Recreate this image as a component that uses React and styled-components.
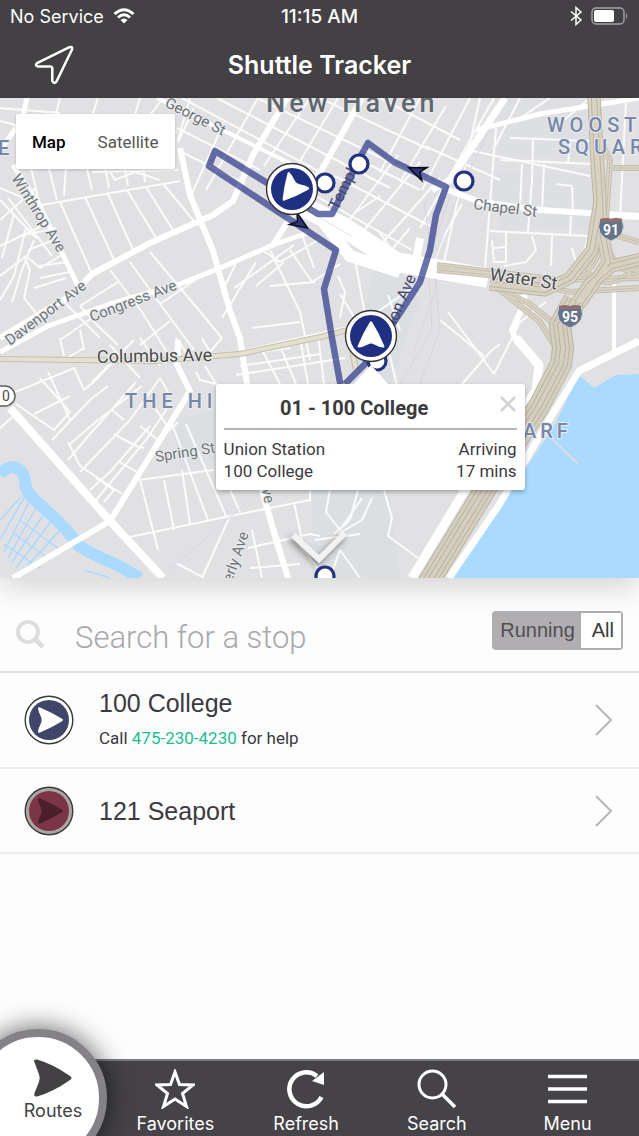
import React, { Component } from 'react'
import styled, { createGlobalStyle } from 'styled-components'

const GlobalStyle = createGlobalStyle`
  * {
    box-sizing: border-box;
  }
  body {
    margin: 0;
    background: #fdfdfe;
    font-family: Roboto, "Liberation Sans", sans-serif;
    color: #3b3a3e;
  }
  button, input {
    font: inherit;
    color: inherit;
    border: 0;
    padding: 0;
    margin: 0;
    background: none;
  }
`;

const Page = styled.div`
  display: flex;
  flex-direction: column;
  min-height: 100vh;
  overflow: hidden;
`;

const Header = styled.header`
  background: #434144;
  color: #fff;
  font-family: Inter, "Liberation Sans", sans-serif;
`;

const StatusBar = styled.div`
  display: grid;
  grid-template-columns: 1fr auto 1fr;
  align-items: center;
  height: 32px;
  padding: 0 10px;
  font-size: 18px;
  svg {
    display: block;
  }
`;

const StatusGroup = styled.div`
  display: flex;
  align-items: center;
  justify-content: ${props => props.$end ? 'flex-end' : 'flex-start'};
  gap: 9px;
`;

const Clock = styled.div`
  font-size: 19px;
  font-weight: 500;
`;

const TitleBar = styled.div`
  display: grid;
  grid-template-columns: 1fr auto 1fr;
  align-items: center;
  height: 66px;
  padding: 0 34px;
  h1 {
    margin: 0;
    font-size: 25px;
    font-weight: 600;
  }
  button {
    justify-self: start;
  }
  svg {
    display: block;
  }
`;

const MapWrapper = styled.section`
  position: relative;
  z-index: 1;
  height: 480px;
  box-shadow: 0 10px 28px rgba(0, 0, 0, 0.16);
`;

const MapCanvas = styled.svg`
  display: block;
  width: 100%;
  height: 100%;
  font-family: Roboto, "Liberation Sans", sans-serif;
`;

const MapTypeSwitch = styled.div`
  position: absolute;
  top: 16px;
  left: 16px;
  display: flex;
  height: 55px;
  background: #fff;
  border-radius: 2px;
  box-shadow: 0 1px 3px rgba(0, 0, 0, 0.2);
`;

const MapTypeButton = styled.button`
  padding: 0 16px;
  font-size: 17px;
  font-weight: ${props => props.$active ? 500 : 400};
  color: ${props => props.$active ? '#000' : '#565656'};
`;

const Popup = styled.div`
  position: absolute;
  top: 286px;
  left: 58%;
  width: 309px;
  margin-left: -155px;
  padding: 8px;
  background: #fff;
  border-radius: 3px;
  box-shadow: 0 2px 4px rgba(0, 0, 0, 0.3);
  &::before {
    content: '';
    position: absolute;
    top: -19px;
    left: 137px;
    border: 18px solid transparent;
    border-top: 0;
    border-bottom: 20px solid #fff;
  }
`;

const PopupHead = styled.div`
  display: flex;
  height: 38px;
  border-bottom: 2px solid #b4b4b6;
  h2 {
    flex: 1;
    margin: 0;
    font-size: 20px;
    line-height: 32px;
    font-weight: 700;
    text-align: center;
  }
  button {
    width: 32px;
    height: 28px;
    padding-left: 14px;
  }
`;

const ArrivalList = styled.div`
  padding-top: 8px;
`;

const Arrival = styled.div`
  display: flex;
  justify-content: space-between;
  font-size: 17px;
  line-height: 22px;
`;

const Collapse = styled.button`
  position: absolute;
  left: 50%;
  bottom: 6px;
  width: 64px;
  margin-left: -34px;
  svg {
    display: block;
    filter: drop-shadow(-2px 3px 3px rgba(0, 0, 0, 0.45));
  }
`;

const SearchBar = styled.div`
  display: flex;
  align-items: center;
  height: 95px;
  padding: 8px 16px 0 16px;
  border-bottom: 2px solid #dedde0;
  svg {
    flex: none;
    margin-top: 12px;
  }
`;

const SearchInput = styled.input`
  flex: 1;
  min-width: 0;
  height: 60px;
  margin: 18px 16px 0 30px;
  font-size: 31px;
  font-weight: 300;
  outline: none;
  &::placeholder {
    color: #a9a8ac;
    opacity: 1;
  }
`;

const Toggle = styled.div`
  display: flex;
  height: 39px;
  margin-top: 4px;
  border: 2px solid #b0aeb2;
  border-radius: 4px;
  font-family: "Liberation Sans", sans-serif;
  font-size: 20px;
`;

const ToggleButton = styled.button`
  padding: ${props => props.$active ? '0 6px' : '0 7px 0 11px'};
  background: ${props => props.$active ? '#b0aeb1' : '#fff'};
  color: ${props => props.$active ? '#514f53' : '#3b3a3e'};
`;

const RouteList = styled.ul`
  flex: 1;
  margin: 0;
  padding: 0;
  list-style: none;
`;

const RouteRow = styled.li`
  display: flex;
  align-items: center;
  height: ${props => props.$tall ? '96px' : '85px'};
  padding: 0 24px;
  border-bottom: 2px solid #ededf0;
  > svg {
    flex: none;
  }
`;

const RouteInfo = styled.div`
  flex: 1;
  margin-left: 25px;
  h3 {
    margin: 0;
    font-family: "Liberation Sans", sans-serif;
    font-size: 25px;
    line-height: 30px;
    font-weight: 400;
  }
  p {
    margin: 10px 0 4px;
    font-size: 17px;
    line-height: 20px;
  }
  a {
    color: #1dbd8e;
    text-decoration: none;
  }
`;

const TabBar = styled.nav`
  position: relative;
  z-index: 1;
  display: grid;
  grid-template-columns: 110px repeat(4, 1fr);
  height: 77px;
  padding-right: 6px;
  background: #454347;
  border-top: 2px solid #7d7b80;
  color: #fff;
  font-family: Inter, "Liberation Sans", sans-serif;
  font-size: 18px;
`;

const Tab = styled.button`
  display: flex;
  flex-direction: column;
  align-items: center;
  padding-top: 8px;
  line-height: 24px;
  svg {
    display: block;
    margin-bottom: 3px;
  }
`;

// 左下角凸出的圆形按钮
const ActiveTab = styled.button`
  position: absolute;
  top: -32px;
  left: -31px;
  display: flex;
  flex-direction: column;
  align-items: center;
  width: 138px;
  height: 138px;
  padding: 22px 0 0 30px;
  border: 8px solid #848286;
  border-radius: 50%;
  background: #fff;
  color: #434144;
  line-height: 24px;
  box-shadow: 0 0 28px rgba(0, 0, 0, 0.65);
  svg {
    display: block;
    margin-bottom: 2px;
  }
`;

// 细小的街道
const minorStreets = [
  // 左上
  'M0 121L27 128M0 108L60 113M27 98L16 170M60 98L55 118M98 98L88 128L177 132M140 98L134 118',
  'M30 164L40 206M48 165L57 200M66 165L64 196M86 165L92 190M105 165L109 188M124 165L128 186M143 165L145 182',
  'M36 206L180 181M60 202L92 274M85 197L114 260M107 192L134 252M127 190L158 241M146 187L176 235M164 185L198 226',
  'M92 172L178 170M110 172L115 180L135 172L160 180M0 188L42 206M0 220L36 188M0 246L50 222M0 200L36 238M8 198L52 256',
  'M14 214L2 258M26 228L14 276L0 300M34 240L22 270L12 302M0 276L26 256L40 268L60 256M24 256L30 270L24 298L40 318M38 266L68 262M40 278L70 272M34 288L66 278',
  'M56 228L20 236M54 240L28 250M80 306L98 326L118 345M100 338L60 298M110 270L142 312L170 357M130 262L160 304L194 350M150 252L192 302L222 338',
  'M80 306L118 282M92 318L60 340M160 304L210 270M170 321L140 345',
  // 市中心
  'M160 102L135 135M190 98L178 140M177 128L260 170M178 150L245 184M194 108L178 142M224 122L190 198M258 98L206 190M310 98L264 166M338 98L292 174M364 98L322 170',
  'M182 98L335 180M217 98L390 188M257 98L448 190M320 98L430 150M380 98L460 140M305 190L412 250M335 176L430 226M356 158L420 190M420 98L380 172M446 106L400 182M470 98L422 190',
  'M420 162L352 245M398 155L345 226M440 178L376 250M425 146L500 180M380 196L356 212M378 230L400 262M410 228L380 264',
  'M270 250L300 312L310 360M256 262L222 318M236 263L222 292M234 288L294 245M290 250L312 282L340 264M284 262L256 286M302 235L314 268M270 286L315 282M252 328L300 322M262 250L280 262L322 238',
  'M246 350L370 322M236 375L345 358M338 276L345 292L340 318M340 294L356 320L350 340M355 260L366 320L360 340M366 320L420 282M388 295L400 330',
  // 右侧
  'M496 128L484 280M520 98L493 150M510 138L592 141M500 160L592 164M533 140L532 180L528 232M522 164L520 210M544 164L542 212M570 142L568 164M556 184L572 186L573 210M490 231L588 236M552 236L551 266M571 216L570 236M588 236L580 270',
  'M492 240L494 262L506 262L506 232M506 247L494 248M532 236L536 250L526 262L504 266M494 98L420 228M480 98L444 262M430 272L444 236L462 204M468 150L590 176M550 98L520 118M590 98L564 120M610 168L639 168M626 100L620 218M610 218L639 219M572 248L580 278',
  'M448 312L472 344L494 374M494 374L520 322L546 302M462 384L490 352L500 344M440 320L484 356M388 348L400 398M384 490L392 518L388 536L418 558M330 490L326 512L340 530L362 498M358 490L350 520L334 534M372 498L362 520L338 534',
  // 左下
  'M0 398L60 374L74 368L84 390M48 372L70 420M60 362L84 348M16 404L54 430L70 412L40 378M34 414L70 396M0 428L16 414M84 390L96 380L118 356M92 382L134 340',
  'M52 440L90 400L108 386M68 460L90 434L136 382M70 444L98 420L142 386M80 472L130 420L160 378M90 490L110 472L150 426M96 500L146 440L170 404M68 442L80 466L98 478L122 494',
  'M112 410L124 420M114 434L136 446L144 448M120 462L140 474M140 426L158 440M155 408L170 430L178 422M160 378L168 392M96 478L114 490L104 502',
  'M140 480L158 550M164 480L174 530M182 470L190 524M172 424L208 520M186 424L226 516M138 480L214 470M130 537L230 516L310 500M230 490L240 512M205 366L216 384L200 380L196 372M226 356L290 348',
  'M60 338L64 356M80 330L84 350M110 345L140 378M140 338L160 366M176 338L190 358M202 338L210 352L222 338M262 350L280 384M280 346L296 384M300 338L308 384M318 335L324 384M240 366L320 354',
  'M248 548L310 534L320 536M250 568L300 564M252 530L262 578M268 505L290 578M294 502L302 540M310 490L310 502M278 536L288 578M230 516L202 578M176 563L204 578M314 540L360 534M330 578L340 550L360 578M300 545L325 578'
]

// 主要道路
const majorStreets = [
  { d: 'M0 338L73 294L92 274L150 243L213 215L233 201L253 155L287 98', w: 6 },
  { d: 'M0 352L48 326L110 304L180 284L220 268L273 245L307 233', w: 5 },
  { d: 'M273 245L290 218L316 180L362 98', w: 6 },
  { d: 'M180 148L190 195L213 251L230 311L240 338L247 384L262 490L276 540L288 578', w: 6 },
  { d: 'M13 165L40 206L63 255L80 290', w: 5 },
  { d: 'M27 98L22 120L0 150', w: 5 },
  { d: 'M10 408L110 521L163 578', w: 8 },
  { d: 'M13 578L110 521', w: 6 },
  { d: 'M110 521L147 461L190 391L177 365L178 340', w: 6 },
  { d: 'M448 190L480 202L540 210L639 216', w: 6 },
  { d: 'M157 98L320 178', w: 4 },
  { d: 'M476 130L540 114L639 98', w: 5 },
  { d: 'M505 98L450 180L432 190', w: 7 },
  { d: 'M420 238L414 272', w: 8 },
  { d: 'M300 205L345 228L396 262L488 278', w: 20 },
  { d: 'M320 218L350 256L400 272', w: 12 },
  { d: 'M516 338L539 365L536 391L462 495L412 578', w: 9 },
  { d: 'M639 341L579 371L552 415L499 505L449 578', w: 7 },
  { d: 'M525 284L524 304L512 330L516 340', w: 6 },
  { d: 'M614 276L614 350', w: 4 }
]

// 高速公路
const mainHighway = 'M574 300L560 325L563 348L561 364L539 406L486 488L424 590'
const highways = [
  'M594 98L597 165L602 231L608 262L588 292L566 322L562 345',
  'M594 98L600 200L592 250L570 278L545 290L490 284',
  'M645 258L612 266L590 284L566 318'
]
const ramps = [
  'M639 278L560 280L437 265',
  'M437 270L500 276L570 292L639 288',
  'M490 285L530 304L552 322L562 340',
  'M500 290L540 322L556 348',
  'M606 220L610 160L596 130',
  'M604 220L618 236L639 242',
  'M610 168L639 168',
  'M600 240L620 268L639 274',
  'M586 270C600 290 620 282 639 268',
  'M560 280C590 278 600 262 602 230'
]

const river = 'M0 475C8 463 22 465 25 480C24 494 38 502 48 512C62 524 72 536 78 545C94 557 112 560 140 578'
const harbor = 'M579 375L594 388L616 375L639 374V578H449L499 505L520 476L552 430Z'
const routeLine = 'M345 384L371 358L382 340L402 310L420 282L430 250L436 215L446 187L394 162L368 143L363 152L332 214L318 214L215 151L209 166L336 250L324 289L332 338L341 388'

const stops = [[325, 183], [359, 164], [464, 181], [377, 361], [325, 576]]

const routes = [
  { name: '100 College', phone: '475-230-4230', fill: '#41456a', ring: '#fff', arrow: '#fff' },
  { name: '121 Seaport', fill: '#7b3547', ring: '#aaa6a2', arrow: '#4a1f2b' }
]

const arrowPath = 'M-11 -11.500Q-11 -13.300 -9 -12.500Q3 -7.500 13 -1.200Q15 0 13 1.200Q3 7.500 -9 12.500Q-11 13.300 -11 11.500Q-10.500 8 -8 3Q-6.500 0 -8 -3Q-10.500 -8 -11 -11.500Z'

const BusMarker = ({ x, y, angle }) => (
  <g transform={`translate(${x} ${y})`}>
    <circle r="25.5" fill="#fff" stroke="#333" strokeWidth="1.4" />
    <circle r="21" fill="#1f3083" />
    <path d={arrowPath} fill="#fff" transform={`rotate(${angle}) scale(1.05)`} />
  </g>
)

const Direction = ({ x, y, angle }) => (
  <path
    d="M-8 -7L9 0L-8 7L-3 0Z"
    fill="#2b3478"
    stroke="#0b0d1c"
    strokeWidth="1.5"
    transform={`translate(${x} ${y}) rotate(${angle})`}
  />
)

const Shield = ({ x, y, number }) => (
  <g transform={`translate(${x} ${y})`}>
    <path d="M-11 -10Q-5 -12 0 -10Q5 -12 11 -10Q14 -2 11 4Q8 9 0 12Q-8 9 -11 4Q-14 -2 -11 -10Z" fill="#65748a" stroke="#d8d8da" />
    <path d="M-11 -10Q-5 -12 0 -10Q5 -12 11 -10V-7H-11Z" fill="#8f6f70" />
    <text y="6" textAnchor="middle" fontSize="14" fontWeight="700" fill="#fff">{number}</text>
  </g>
)

const StreetName = ({ x, y, angle = 0, size = 15, dark, children }) => (
  <text
    transform={`translate(${x} ${y}) rotate(${angle})`}
    fontSize={size}
    fontWeight="400"
    fill={dark ? '#4b4b4b' : '#6d7478'}
    stroke="#ececee"
    strokeWidth="2"
    paintOrder="stroke"
  >
    {children}
  </text>
)

const District = ({ x, y, size = 20, spacing = 5, fill = '#7688aa', children }) => (
  <text
    x={x}
    y={y}
    fontSize={size}
    fontWeight="500"
    letterSpacing={spacing}
    fill={fill}
    stroke="#ececee"
    strokeWidth="2"
    paintOrder="stroke"
  >
    {children}
  </text>
)

const MapDrawing = () => (
  <MapCanvas viewBox="0 98 639 480" preserveAspectRatio="xMidYMid slice" role="img" aria-label="Map">
    <rect y="98" width="639" height="480" fill="#e1e1e3" />
    <path d="M312 490H390L400 578H312ZM380 240L420 300L390 384H345L360 330ZM172 420L215 410V460L180 470Z" fill="#dcdfe1" />
    <path d="M500 98H590V160L500 155ZM490 170H595V230H500Z" fill="#dddfe2" />
    <g fill="none" stroke="#fbfbfc" strokeWidth="2" strokeLinejoin="round">
      {minorStreets.map((d, index) => <path d={d} key={index} />)}
    </g>
    <g fill="none" stroke="#d3d8e0" strokeWidth="1">
      <path d="M505 98L460 190L434 260L440 330L420 384M500 98L452 190L428 262L432 330L400 384M424 200L436 290L414 350M160 578L250 500" />
    </g>
    <path d={harbor} fill="#aadaff" />
    <path d="M553 440L574 460L578 464" fill="none" stroke="#dcdcdf" strokeWidth="2" />
    <path d={river} fill="none" stroke="#aadaff" strokeWidth="12" />
    <g fill="none" stroke="#aadaff" strokeWidth="1.5">
      <path d="M26 494L0 540M30 500L4 552M36 508L8 558M44 514L12 562M52 520L16 568M60 530L22 572M20 520L60 550M12 532L50 560M4 544L40 568M0 520L20 498M84 570L110 578" />
    </g>
    <g fill="none" stroke="#fff" strokeLinejoin="round">
      {majorStreets.map((road, index) => <path d={road.d} strokeWidth={road.w} key={index} />)}
    </g>
    <path d="M305 208L330 224L352 236M318 236L336 246" fill="none" stroke="#dfe3e8" strokeWidth="1" />
    <path d="M0 359L155 361L240 354L320 337L348 330L356 370" fill="none" stroke="#c3bfab" strokeWidth="6" />
    <path d="M0 359L155 361L240 354L320 337L348 330L356 370" fill="none" stroke="#e4e0cf" strokeWidth="4" />
    {[6, 4, 1].map((width, index) => (
      <g fill="none" stroke={index === 1 ? '#dad5c8' : '#c4beac'} strokeWidth={width} key={width}>
        {ramps.map(d => <path d={d} key={d} />)}
      </g>
    ))}
    {[13, 11, 6, 4].map((width, index) => (
      <g fill="none" stroke={index % 2 ? '#d8d2c3' : '#bdb6a2'} strokeWidth={width} strokeLinejoin="round" key={width}>
        {highways.map(d => <path d={d} key={d} />)}
      </g>
    ))}
    {[22, 20, 14, 12, 6, 4].map((width, index) => (
      <path
        d={mainHighway}
        fill="none"
        stroke={index % 2 ? '#d5cfc1' : '#bab39f'}
        strokeWidth={width}
        strokeLinejoin="round"
        key={width}
      />
    ))}

    <StreetName x={164} y={106} angle={27}>George St</StreetName>
    <StreetName x={11} y={178} angle={58}>Winthrop Ave</StreetName>
    <StreetName x={10} y={346} angle={-37}>Davenport Ave</StreetName>
    <StreetName x={92} y={322} angle={-21}>Congress Ave</StreetName>
    <StreetName x={97} y={363} angle={-1} size={18} dark>Columbus Ave</StreetName>
    <StreetName x={156} y={462} angle={-9}>Spring St</StreetName>
    <StreetName x={473} y={209} angle={7}>Chapel St</StreetName>
    <StreetName x={489} y={280} angle={8} size={18} dark>Water St</StreetName>
    <StreetName x={232} y={583} angle={-71}>erly Ave</StreetName>
    <StreetName x={262} y={489} angle={80}>ve</StreetName>

    <path d={routeLine} fill="none" stroke="#293687" strokeOpacity="0.7" strokeWidth="6.5" strokeLinejoin="round" />

    <g fill="#42456b" fontSize="16">
      <text transform="translate(338 211) rotate(-64)">Temple</text>
      <text transform="translate(396 325) rotate(-67)">ion Ave</text>
    </g>
    <District x={266} y={112} size={27} spacing={4} fill="#5f686e">New Haven</District>
    <District x={547} y={132}>WOOST</District>
    <District x={558} y={154}>SQUAR</District>
    <District x={125} y={408}>THE HI</District>
    <District x={523} y={438} spacing={4}>ARF</District>
    <District x={-2} y={155}>E</District>
    <Shield x={611} y={229} number="91" />
    <Shield x={570} y={316} number="95" />
    <rect x="-14" y="386" width="29" height="20" rx="10" fill="#fff" stroke="#5f5f5f" strokeWidth="1.5" />
    <text x="2" y="401" fontSize="14" fill="#4a4a4a">0</text>

    <Direction x={417} y={171} angle={202} />
    <Direction x={300} y={223} angle={33} />
    {stops.map(([x, y], index) => (
      <circle cx={x} cy={y} r="9" fill="#fff" stroke="#22327f" strokeWidth="3.2" key={index} />
    ))}
    <BusMarker x={292} y={189} angle={128} />
    <BusMarker x={371} y={336} angle={-90} />
  </MapCanvas>
)

const RouteIcon = ({ route }) => (
  <svg width="50" height="50" viewBox="-25 -25 50 50" aria-hidden="true">
    <circle r="23.8" fill={route.ring} stroke="#3a3a3c" strokeWidth="1.4" />
    <circle r="20" fill={route.fill} />
    <path d={arrowPath} fill={route.arrow} />
  </svg>
)

const tabs = [
  { label: 'Favorites', icon: <path d="M20 3L24.5 15.5L38 16L27.500 24.500L31.500 37.500L20 30L8.500 37.500L12.500 24.500L2 16L15.500 15.500Z" strokeWidth="3" /> },
  { label: 'Refresh', icon: <><path d="M35.500 28A17 17 0 1 1 31 7" strokeWidth="4.500" /><path d="M38 3V16L26 12Z" fill="#fff" stroke="none" /></> },
  { label: 'Search', icon: <><circle cx="15.500" cy="15.500" r="13.500" strokeWidth="3" /><path d="M25 25L38 38" strokeWidth="3.500" /></> },
  { label: 'Menu', icon: <path d="M0 7.500H39M0 20H39M0 32.500H39" strokeWidth="3.500" /> }
]

class App extends Component {
  state = {
    mapType: 'Map',
    filter: 'Running',
    keyword: '',
    popupOpen: true
  }

  render() {
    const { mapType, filter, keyword, popupOpen } = this.state
    return (
      <Page>
        <GlobalStyle />
        <Header>
          <StatusBar>
            <StatusGroup>
              <span>No Service</span>
              <svg width="22" height="16" viewBox="0 0 22 16" fill="none" stroke="#fff" strokeWidth="3">
                <path d="M1.500 6Q11 -2.500 20.500 6" />
                <path d="M5 9.500Q11 4 17 9.500" />
                <path d="M7.500 12Q11 9 14.500 12L11 15.500Z" fill="#fff" stroke="none" />
              </svg>
            </StatusGroup>
            <Clock>11:15 AM</Clock>
            <StatusGroup $end>
              <svg width="12" height="20" viewBox="0 0 12 20" fill="none" stroke="#fff" strokeWidth="1.500">
                <path d="M1 5.500L11 14L6 18.500V1.500L11 6L1 14.500" />
              </svg>
              <svg width="38" height="18" viewBox="0 0 38 18">
                <rect x="1" y="1" width="32" height="16" rx="4" fill="none" stroke="#a5a4a6" strokeWidth="1.400" />
                <rect x="3" y="3" width="20" height="12" rx="2" fill="#fff" />
                <path d="M35 6Q37.500 9 35 12Z" fill="#a5a4a6" />
              </svg>
            </StatusGroup>
          </StatusBar>
          <TitleBar>
            <button type="button" aria-label="My location">
              <svg width="40" height="40" viewBox="0 0 40 40" fill="none" stroke="#fff" strokeWidth="2.500" strokeLinejoin="round">
                <path d="M35.500 2.200Q39 1 38 4.500L22.500 36.500Q20 39.500 18.300 36V23Q18 21.500 16.500 21.500H4Q0.500 20.500 3 18.200Z" />
              </svg>
            </button>
            <h1>Shuttle Tracker</h1>
          </TitleBar>
        </Header>

        <MapWrapper>
          <MapDrawing />
          <MapTypeSwitch>
            {
              ['Map', 'Satellite'].map(type => (
                <MapTypeButton
                  type="button"
                  key={type}
                  $active={mapType === type}
                  onClick={() => { this.setState({ mapType: type }) }}
                >
                  {type}
                </MapTypeButton>
              ))
            }
          </MapTypeSwitch>
          {
            popupOpen && (
              <Popup>
                <PopupHead>
                  <h2>01 - 100 College</h2>
                  <button type="button" aria-label="Close" onClick={() => { this.setState({ popupOpen: false }) }}>
                    <svg width="16" height="16" viewBox="0 0 16 16" stroke="#d3d3d5" strokeWidth="2.500">
                      <path d="M1 1L15 15M15 1L1 15" />
                    </svg>
                  </button>
                </PopupHead>
                <ArrivalList>
                  <Arrival><span>Union Station</span><span>Arriving</span></Arrival>
                  <Arrival><span>100 College</span><span>17 mins</span></Arrival>
                </ArrivalList>
              </Popup>
            )
          }
          <Collapse type="button" aria-label="Collapse map">
            <svg width="64" height="44" viewBox="0 0 64 44" fill="none" stroke="#f2f2f3" strokeWidth="6">
              <path d="M7 7L33 31L59 5" />
            </svg>
          </Collapse>
        </MapWrapper>

        <SearchBar>
          <svg width="29" height="29" viewBox="0 0 29 29" fill="none" stroke="#dddde0">
            <circle cx="12" cy="12" r="10" strokeWidth="4" />
            <path d="M19 19L27 27" strokeWidth="5" />
          </svg>
          <SearchInput
            type="text"
            aria-label="Search for a stop"
            placeholder="Search for a stop"
            value={keyword}
            onChange={(e) => { this.setState({ keyword: e.target.value }) }}
          />
          <Toggle>
            {
              ['Running', 'All'].map(name => (
                <ToggleButton
                  type="button"
                  key={name}
                  $active={filter === name}
                  onClick={() => { this.setState({ filter: name }) }}
                >
                  {name}
                </ToggleButton>
              ))
            }
          </Toggle>
        </SearchBar>

        <RouteList>
          {
            routes.map(route => (
              <RouteRow key={route.name} $tall={!!route.phone}>
                <RouteIcon route={route} />
                <RouteInfo>
                  <h3>{route.name}</h3>
                  {route.phone && <p>Call <a href={`tel:${route.phone}`}>{route.phone}</a> for help</p>}
                </RouteInfo>
                <svg width="22" height="34" viewBox="0 0 22 34" fill="none" stroke="#b5b4b8" strokeWidth="2">
                  <path d="M3 2L18 17L3 32" />
                </svg>
              </RouteRow>
            ))
          }
        </RouteList>

        <TabBar>
          <ActiveTab type="button">
            <svg width="40" height="38" viewBox="0 0 40 38" fill="#434144">
              <path d="M1 2Q1 0 4 0.500Q20 5 37 17Q40 19 37 21Q20 33 4 37.500Q0.500 38 1.500 34L6 23Q7.500 19 6 15.500Z" />
            </svg>
            Routes
          </ActiveTab>
          <span />
          {
            tabs.map(tab => (
              <Tab type="button" key={tab.label}>
                <svg width="40" height="40" viewBox="0 0 40 40" fill="none" stroke="#fff">{tab.icon}</svg>
                {tab.label}
              </Tab>
            ))
          }
        </TabBar>
      </Page>
    )
  }
}

export default App
